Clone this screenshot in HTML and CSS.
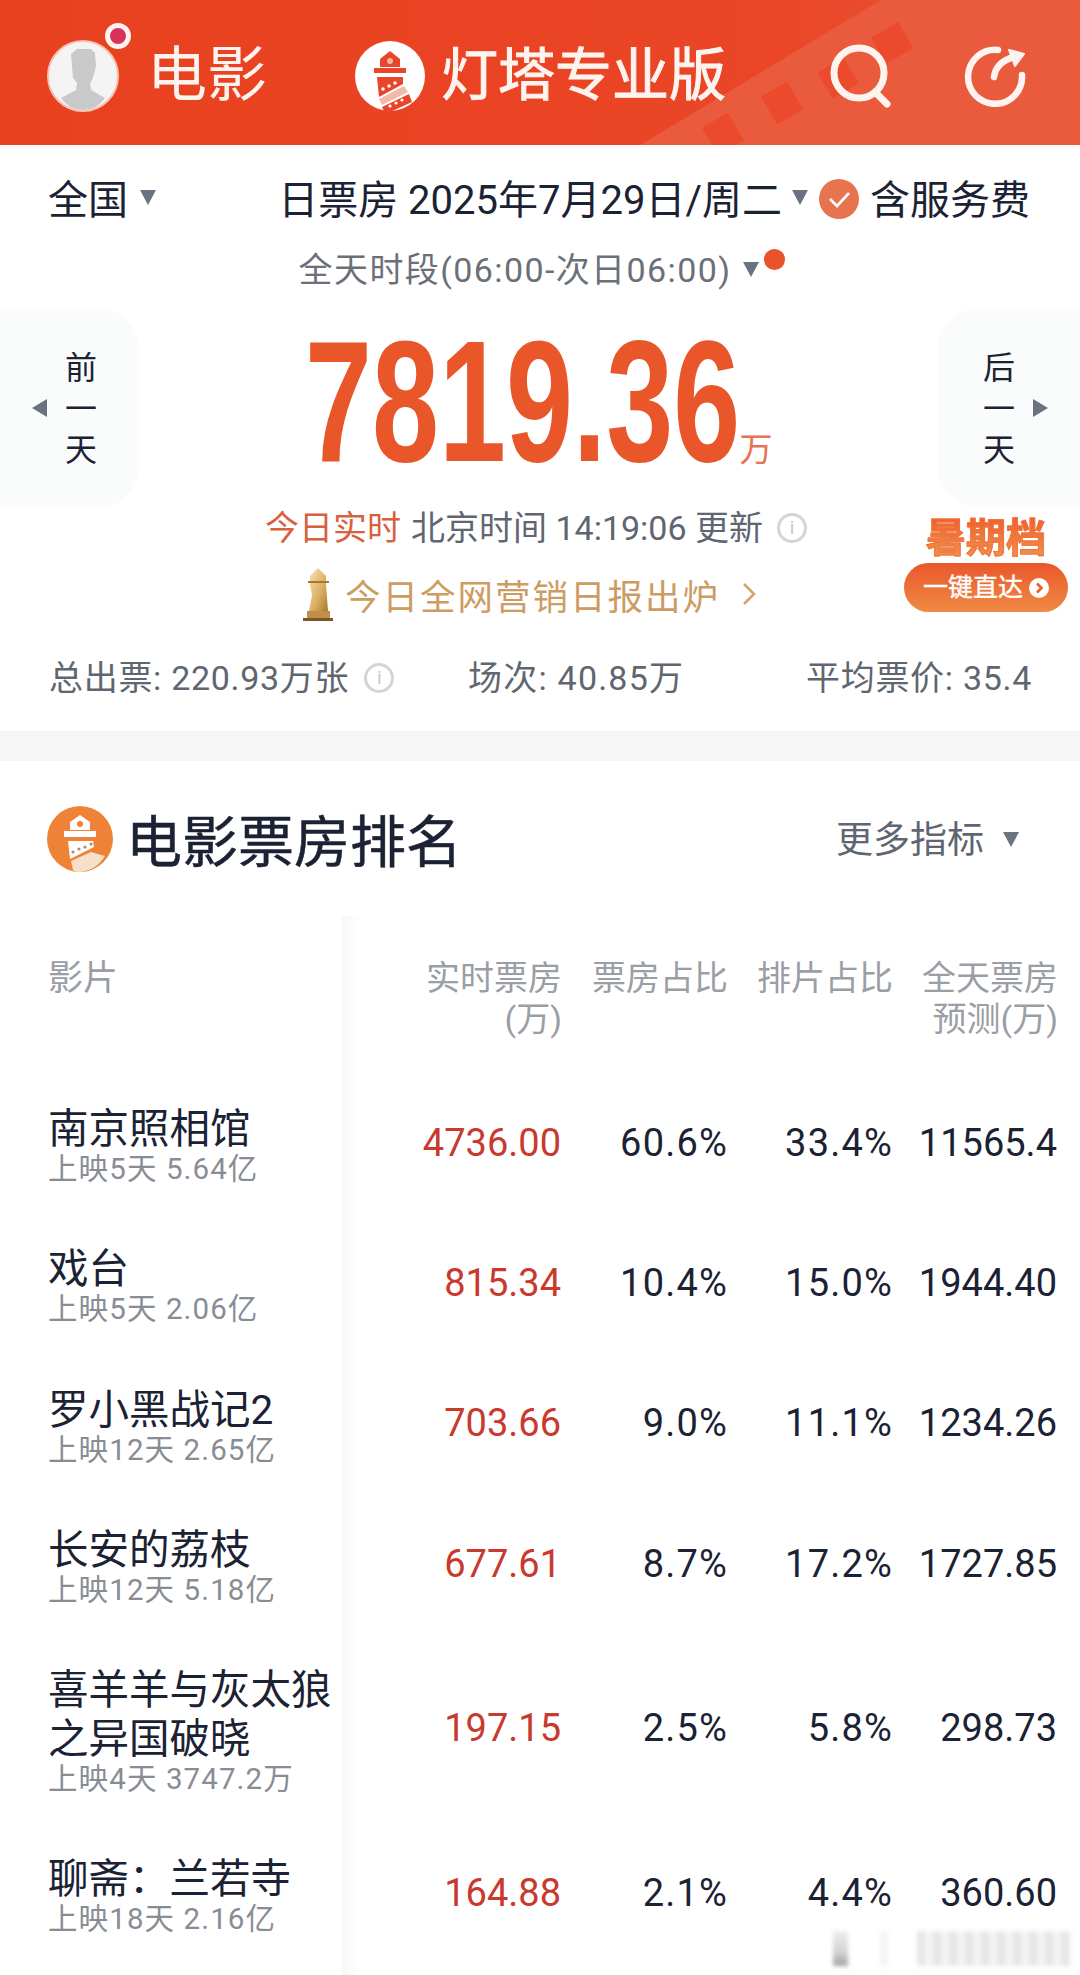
FILE: index.html
```html
<!DOCTYPE html>
<html lang="zh-CN">
<head>
    <meta charset="UTF-8">
    <title>灯塔专业版</title>
    <link rel="stylesheet" href="styles.css">
</head>
<body>
    <header class="topbar">
        <svg class="topbar-bg" viewBox="0 0 1080 145">
            <polygon points="881,0 1080,0 1080,145 640,145" fill="#ea5a3c"/>
            <rect x="876" y="28" width="32" height="30" fill="#eb4b2c" transform="rotate(-30 892 43)"/>
            <rect x="823" y="63" width="30" height="30" fill="#eb4b2c" transform="rotate(-30 838 78)"/>
            <rect x="767" y="87" width="30" height="32" fill="#eb4b2c" transform="rotate(-30 782 103)"/>
            <rect x="708" y="118" width="30" height="32" fill="#eb4b2c" transform="rotate(-30 723 134)"/>
        </svg>
        <div class="avatar">
            <svg viewBox="0 0 72 72" width="72" height="72">
                <circle cx="36" cy="36" r="35" fill="#f4f4f4" stroke="#f9c3b4" stroke-width="2"/>
                <path d="M24 14 L30 9 L44 9 L48 13 L49 26 L46 38 L43 43 L44 50 L58 58 Q50 70 36 70 Q22 70 14 58 L29 50 L30 43 L26 38 Z" fill="#c8c9ca"/>
            </svg>
            <span class="avatar-dot"></span>
        </div>
        <span class="topbar-title">电影</span>
        <svg class="topbar-logo" viewBox="0 0 72 72" width="72" height="72">
            <circle cx="36" cy="36" r="35" fill="#fff"/>
            <path d="M36 11 L46 19 V27 H26 V19 Z" fill="#e8452a"/>
            <circle cx="36" cy="21" r="3" fill="#f4b5a3"/>
            <rect x="20" y="28" width="32" height="5" fill="#e8452a"/>
            <polygon points="23,37 49,37 49,44 25,57" fill="#e8452a"/>
            <circle cx="29" cy="49" r="1.8" fill="#fff"/>
            <circle cx="35" cy="46" r="1.8" fill="#fff"/>
            <circle cx="41" cy="43" r="1.8" fill="#fff"/>
            <polygon points="25,59 50,46 54,52 28,65" fill="#f2b9a6"/>
            <polygon points="28,67 55,54 58,62 36,72 30,71" fill="#e8452a"/>
            <circle cx="36" cy="66" r="1.6" fill="#fff"/>
            <circle cx="42" cy="63" r="1.6" fill="#fff"/>
            <circle cx="48" cy="60" r="1.6" fill="#fff"/>
        </svg>
        <span class="topbar-brand">灯塔专业版</span>
        <svg class="icon-search" viewBox="0 0 62 64" width="62" height="64">
            <circle cx="29" cy="29" r="25" fill="none" stroke="#fdf3ef" stroke-width="7"/>
            <line x1="45" y1="48" x2="57" y2="60" stroke="#fdf3ef" stroke-width="7" stroke-linecap="round"/>
        </svg>
        <svg class="icon-share" viewBox="0 0 62 62" width="62" height="62">
            <path d="M34 5 A27 27 0 1 0 58 30" fill="none" stroke="#fdf3ef" stroke-width="6.5" stroke-linecap="round"/>
            <path d="M30 32 Q32 17 50 12" fill="none" stroke="#fdf3ef" stroke-width="6.5" stroke-linecap="round"/>
            <polygon points="45,5 60,9 51,21" fill="#fdf3ef" stroke="#fdf3ef" stroke-width="2" stroke-linejoin="round"/>
        </svg>
    </header>

    <section class="summary">
        <div class="filter-row">
            <span>全国</span><i class="tri-down tri-region"></i>
            <span class="filter-date">日票房 2025年7月29日/周二</span><i class="tri-down tri-date"></i>
            <svg class="check" viewBox="0 0 40 40" width="40" height="40">
                <circle cx="20" cy="20" r="20" fill="#e8734f"/>
                <path d="M11 20 L18 27 L30 14" fill="none" stroke="#fff" stroke-width="2.6"/>
            </svg>
            <span class="filter-fee">含服务费</span>
        </div>
        <div class="period-row">
            <span>全天时段(06:00-次日06:00)</span><i class="tri-down tri-period"></i><i class="period-dot"></i>
        </div>

        <div class="hero">
            <div class="day-tab day-tab-prev"><i class="tri-left"></i><span class="day-text">前一天</span></div>
            <div class="total">
                <span class="total-box"><span class="total-num">7819.36</span></span><span class="total-unit">万</span>
            </div>
            <div class="day-tab day-tab-next"><span class="day-text">后一天</span><i class="tri-right"></i></div>
        </div>

        <div class="live-row">
            <span class="live-tag">今日实时</span>
            <span>北京时间 14:19:06 更新</span>
            <span class="info info-live">i</span>
        </div>

        <div class="report-row">
            <svg class="report-tower" viewBox="0 0 32 54" width="32" height="54">
                <defs>
                    <linearGradient id="gold" x1="0" y1="0" x2="1" y2="1">
                        <stop offset="0" stop-color="#f6e4b4"/>
                        <stop offset="0.6" stop-color="#d9ae62"/>
                        <stop offset="1" stop-color="#a9772c"/>
                    </linearGradient>
                </defs>
                <path d="M16 1 L24 9 L24 17 L26 44 L7 44 L10 28 L8 17 L8 9 Z" fill="url(#gold)"/>
                <rect x="6" y="14" width="21" height="2" fill="#a9782f"/>
                <rect x="5" y="44" width="23" height="8" fill="#bd8f48"/>
                <rect x="1" y="51" width="30" height="3" fill="#7d5520"/>
            </svg>
            <span>今日全网营销日报出炉</span>
            <svg class="report-arrow" viewBox="0 0 14 24" width="14" height="24">
                <path d="M2 2 L12 12 L2 22" fill="none" stroke="#d3a46c" stroke-width="2.6"/>
            </svg>
        </div>

        <div class="stats-row">
            <span class="stat stat-tickets">总出票: 220.93万张<span class="info info-stat">i</span></span>
            <span class="stat stat-shows">场次: 40.85万</span>
            <span class="stat">平均票价: 35.4</span>
        </div>

        <a class="promo">
            <span class="promo-title">暑期档</span>
            <span class="promo-btn">一键直达<i class="promo-go"><svg viewBox="0 0 20 20" width="20" height="20"><circle cx="10" cy="10" r="10" fill="#fff"/><path d="M8 5.5 L12.5 10 L8 14.5" fill="none" stroke="#e8602c" stroke-width="2.6"/></svg></i></span>
        </a>
    </section>

    <section class="rank">
        <div class="rank-head">
            <svg class="rank-logo" viewBox="0 0 66 66" width="66" height="66">
                <circle cx="33" cy="33" r="33" fill="#ee8236"/>
                <path d="M33 9 L43 16 V24 H23 V16 Z" fill="#fff"/>
                <circle cx="33" cy="18" r="3" fill="#ee8236"/>
                <rect x="17" y="25" width="32" height="6" fill="#fff"/>
                <polygon points="21,35 46,35 47,41 23,53" fill="#fff"/>
                <circle cx="26" cy="46" r="1.6" fill="#a98c72"/>
                <circle cx="32" cy="43" r="1.6" fill="#a98c72"/>
                <circle cx="38" cy="41" r="1.6" fill="#a98c72"/>
                <circle cx="44" cy="38" r="1.6" fill="#a98c72"/>
                <path d="M24 55 L44 46 L58 50 A33 33 0 0 1 33 66 Q27 66 26 64 Z" fill="#f7e0c9"/>
            </svg>
            <h2 class="rank-title">电影票房排名</h2>
            <span class="rank-more">更多指标</span><i class="tri-down tri-more"></i>
        </div>

        <div class="table">
            <div class="row row-head">
                <div class="cell-name">影片</div>
                <div class="cell">实时票房<br>(万)</div>
                <div class="cell">票房占比</div>
                <div class="cell">排片占比</div>
                <div class="cell">全天票房<br>预测(万)</div>
            </div>
            <div class="row">
                <div class="cell-name"><div class="film">南京照相馆</div><div class="film-sub">上映5天 5.64亿</div></div>
                <div class="cell num-red">4736.00</div><div class="cell cell-pct">60.6%</div><div class="cell cell-pct">33.4%</div><div class="cell">11565.4</div>
            </div>
            <div class="row">
                <div class="cell-name"><div class="film">戏台</div><div class="film-sub">上映5天 2.06亿</div></div>
                <div class="cell num-red">815.34</div><div class="cell cell-pct">10.4%</div><div class="cell cell-pct">15.0%</div><div class="cell">1944.40</div>
            </div>
            <div class="row">
                <div class="cell-name"><div class="film">罗小黑战记2</div><div class="film-sub">上映12天 2.65亿</div></div>
                <div class="cell num-red">703.66</div><div class="cell cell-pct">9.0%</div><div class="cell cell-pct">11.1%</div><div class="cell">1234.26</div>
            </div>
            <div class="row">
                <div class="cell-name"><div class="film">长安的荔枝</div><div class="film-sub">上映12天 5.18亿</div></div>
                <div class="cell num-red">677.61</div><div class="cell cell-pct">8.7%</div><div class="cell cell-pct">17.2%</div><div class="cell">1727.85</div>
            </div>
            <div class="row">
                <div class="cell-name"><div class="film">喜羊羊与灰太狼<br>之异国破晓</div><div class="film-sub">上映4天 3747.2万</div></div>
                <div class="cell num-red">197.15</div><div class="cell cell-pct">2.5%</div><div class="cell cell-pct">5.8%</div><div class="cell">298.73</div>
            </div>
            <div class="row">
                <div class="cell-name"><div class="film">聊斋：兰若寺</div><div class="film-sub">上映18天 2.16亿</div></div>
                <div class="cell num-red">164.88</div><div class="cell cell-pct">2.1%</div><div class="cell cell-pct">4.4%</div><div class="cell">360.60</div>
            </div>
        </div>
        <div class="watermark"></div>
    </section>
</body>
</html>
```

FILE: styles.css
```css
* {
    box-sizing: border-box;
}

html, body {
    margin: 0;
    padding: 0;
}

body {
    width: 1080px;
    height: 1975px;
    overflow: hidden;
    background-color: #fff;
    color: #1b2233;
    font-family: Roboto, "Noto Sans CJK SC", sans-serif;
}

i {
    display: block;
    font-style: normal;
}

/* top bar */
.topbar {
    position: relative;
    display: flex;
    align-items: center;
    height: 145px;
    padding: 6px 0 0 47px;
    background: linear-gradient(90deg, #e8411f, #ea4526 70%, #e9573a);
    color: #fdf3ef;
    overflow: hidden;
}

.topbar-bg {
    position: absolute;
    left: 0;
    top: 0;
    width: 1080px;
    height: 145px;
}

.topbar > * {
    flex: none;
}

.avatar {
    position: relative;
    width: 72px;
    height: 72px;
}

.avatar svg {
    display: block;
}

.avatar-dot {
    position: absolute;
    left: 58px;
    top: -17px;
    width: 26px;
    height: 26px;
    border: 5px solid #fdf3ef;
    border-radius: 50%;
    background-color: #d8325c;
}

.topbar-title {
    position: relative;
    margin-left: 28px;
    width: 121px;
    font-size: 60px;
    line-height: 70px;
    white-space: nowrap;
}

.topbar-logo {
    position: relative;
    margin-left: 86px;
}

.topbar-brand {
    position: relative;
    margin-left: 15px;
    width: 286px;
    font-size: 57px;
    line-height: 70px;
    white-space: nowrap;
    -webkit-text-stroke: 1px #fdf3ef;
}

.icon-search {
    position: relative;
    margin-left: 103px;
}

.icon-share {
    position: relative;
    margin-left: 72px;
}

/* triangles */
.tri-down {
    width: 0;
    height: 0;
    border-left: 8px solid transparent;
    border-right: 8px solid transparent;
    border-top: 15px solid #6b7280;
}

.tri-left {
    width: 0;
    height: 0;
    border-top: 9px solid transparent;
    border-bottom: 9px solid transparent;
    border-right: 15px solid #6b7280;
}

.tri-right {
    width: 0;
    height: 0;
    border-top: 9px solid transparent;
    border-bottom: 9px solid transparent;
    border-left: 15px solid #6b7280;
}

/* summary */
.summary {
    position: relative;
    padding-top: 31px;
    padding-bottom: 33px;
}

.filter-row {
    display: flex;
    align-items: center;
    height: 50px;
    padding: 0 50px 0 48px;
    font-size: 40px;
    line-height: 50px;
}

.tri-region {
    margin-left: 12px;
    margin-top: -8px;
}

.filter-date {
    margin-left: auto;
    white-space: nowrap;
}

.tri-date {
    margin-left: 10px;
    margin-top: -8px;
}

.check {
    margin-left: 11px;
    margin-top: -4px;
}

.filter-fee {
    margin-left: 11px;
    white-space: nowrap;
}

.period-row {
    display: flex;
    align-items: center;
    justify-content: center;
    height: 40px;
    margin-top: 24px;
    padding-left: 4px;
    color: #6b7078;
    font-size: 34px;
    line-height: 40px;
    letter-spacing: 1.4px;
}

.tri-period {
    margin-left: 12px;
    margin-top: -2px;
}

.period-dot {
    width: 21px;
    height: 21px;
    margin-left: 5px;
    margin-top: -22px;
    border-radius: 50%;
    background-color: #e8532b;
}

.hero {
    display: flex;
    align-items: center;
    justify-content: space-between;
    height: 200px;
    margin-top: 18px;
}

.day-tab {
    display: flex;
    align-items: center;
    height: 200px;
    background-color: #fafbfb;
    font-size: 32px;
}

.day-tab-prev {
    width: 140px;
    padding-left: 32px;
    border-radius: 0 44px 44px 0;
}

.day-tab-next {
    width: 143px;
    padding-left: 46px;
    border-radius: 44px 0 0 44px;
}

.day-text {
    width: 32px;
    margin: 3px 18px 0;
    line-height: 41px;
}

.day-tab-next .day-text {
    margin-left: 0;
}

.total {
    display: flex;
    align-items: baseline;
    padding-top: 41px;
    color: #e8562a;
    line-height: 130px;
}

.total-box {
    display: inline-block;
    width: 435px;
    white-space: nowrap;
}

.total-num {
    display: inline-block;
    font-family: "Liberation Sans", sans-serif;
    font-weight: 700;
    font-size: 172px;
    transform: scaleX(0.7);
    transform-origin: left center;
}

.total-unit {
    color: #e8734f;
    font-size: 33px;
    line-height: 33px;
}

.live-row {
    display: flex;
    align-items: center;
    justify-content: center;
    height: 40px;
    padding-right: 8px;
    color: #5f6672;
    font-size: 34px;
    line-height: 40px;
}

.live-tag {
    margin-right: 10px;
    color: #d8603c;
}

.info {
    display: inline-block;
    width: 30px;
    height: 30px;
    border: 3px solid #d2d4d6;
    border-radius: 50%;
    color: #c6c8cb;
    font-size: 19px;
    line-height: 24px;
    letter-spacing: 0;
    text-align: center;
}

.info-live {
    margin-left: 14px;
}

.report-row {
    display: flex;
    align-items: center;
    justify-content: center;
    height: 54px;
    margin-top: 19px;
    padding-right: 22px;
    color: #cd9c62;
    font-size: 35.5px;
    letter-spacing: 2px;
}

.report-tower {
    margin-right: 11px;
}

.report-arrow {
    margin-left: 22px;
}

.stats-row {
    display: flex;
    align-items: center;
    justify-content: space-between;
    height: 40px;
    margin-top: 37px;
    padding: 0 48px 0 49px;
    color: #60666f;
    font-size: 34px;
    line-height: 40px;
    letter-spacing: 0.7px;
}

.stat {
    display: flex;
    align-items: center;
}

.stat-shows {
    margin-left: -48px;
    letter-spacing: 1.2px;
}

.info-stat {
    margin-left: 15px;
}

.promo {
    position: absolute;
    left: 904px;
    top: 370px;
    display: flex;
    flex-direction: column;
    align-items: center;
    width: 164px;
}

.promo-title {
    background: linear-gradient(180deg, #ef5a2d, #f09a52);
    -webkit-background-clip: text;
    background-clip: text;
    color: transparent;
    font-size: 40px;
    font-weight: 700;
    line-height: 48px;
    -webkit-text-stroke: 1px #f0743c;
}

.promo-btn {
    display: flex;
    align-items: center;
    justify-content: center;
    width: 164px;
    height: 49px;
    border-radius: 25px;
    background: linear-gradient(180deg, #e9582a, #f08a45);
    color: #fff;
    font-size: 25px;
    line-height: 49px;
    white-space: nowrap;
    -webkit-text-stroke: 0.4px #fff;
}

.promo-go {
    margin-left: 6px;
    height: 20px;
}

.promo-go svg {
    display: block;
}

/* ranking */
.rank {
    position: relative;
    padding-top: 45px;
    border-top: 30px solid #f6f6f7;
}

.rank-head {
    display: flex;
    align-items: center;
    height: 70px;
    padding-left: 47px;
}

.rank-logo {
    margin-top: -5px;
}

.rank-title {
    margin: 0 0 0 13px;
    padding-top: 4px;
    font-size: 56px;
    font-weight: 400;
    line-height: 70px;
    -webkit-text-stroke: 0.5px #1b2233;
}

.rank-more {
    margin-left: auto;
    color: #5f6672;
    font-size: 37px;
    line-height: 50px;
}

.tri-more {
    margin: -4px 61px 0 19px;
}

.table {
    position: relative;
    margin-top: 40px;
}

.table::before {
    content: "";
    position: absolute;
    left: 342px;
    top: 0;
    bottom: -40px;
    width: 18px;
    background: linear-gradient(90deg, #f6f7f7, #fff);
}

.row {
    position: relative;
    display: grid;
    grid-template-columns: 349px 212px 166px 165px 165px;
    align-items: center;
    padding: 29px 0 28px;
}

.row-head {
    align-items: start;
    padding: 42px 0 34px 0;
    color: #9a9ea5;
    font-size: 35px;
    line-height: 41px;
}

.row-head .cell {
    margin-right: -1px;
    padding-bottom: 0;
    font-size: 34px;
}

.cell-name {
    padding-left: 48px;
}

.film {
    padding-top: 2px;
    font-size: 40.5px;
    line-height: 49px;
}

.film-sub {
    margin-top: -1px;
    color: #888d95;
    font-size: 29.5px;
    line-height: 33.3px;
    letter-spacing: 1.1px;
    white-space: nowrap;
}

.cell {
    padding-bottom: 4px;
    font-size: 38px;
    text-align: right;
    white-space: nowrap;
}

.cell-pct {
    margin-right: -1px;
    letter-spacing: 1.2px;
}

.num-red {
    color: #c8392e;
}

.watermark {
    position: absolute;
    left: 833px;
    top: 1170px;
    width: 238px;
    height: 35px;
    background:
        linear-gradient(180deg, #ececec, #d4d4d4 60%, #a0a0a0) 0 0 / 15px 100% no-repeat,
        linear-gradient(#f4f4f4, #f4f4f4) 47px 0 / 8px 100% no-repeat,
        repeating-linear-gradient(90deg, #e6e6e6 0 8px, #f4f4f4 8px 16px) 84px 0 / 154px 100% no-repeat;
    filter: blur(2px);
}
```
